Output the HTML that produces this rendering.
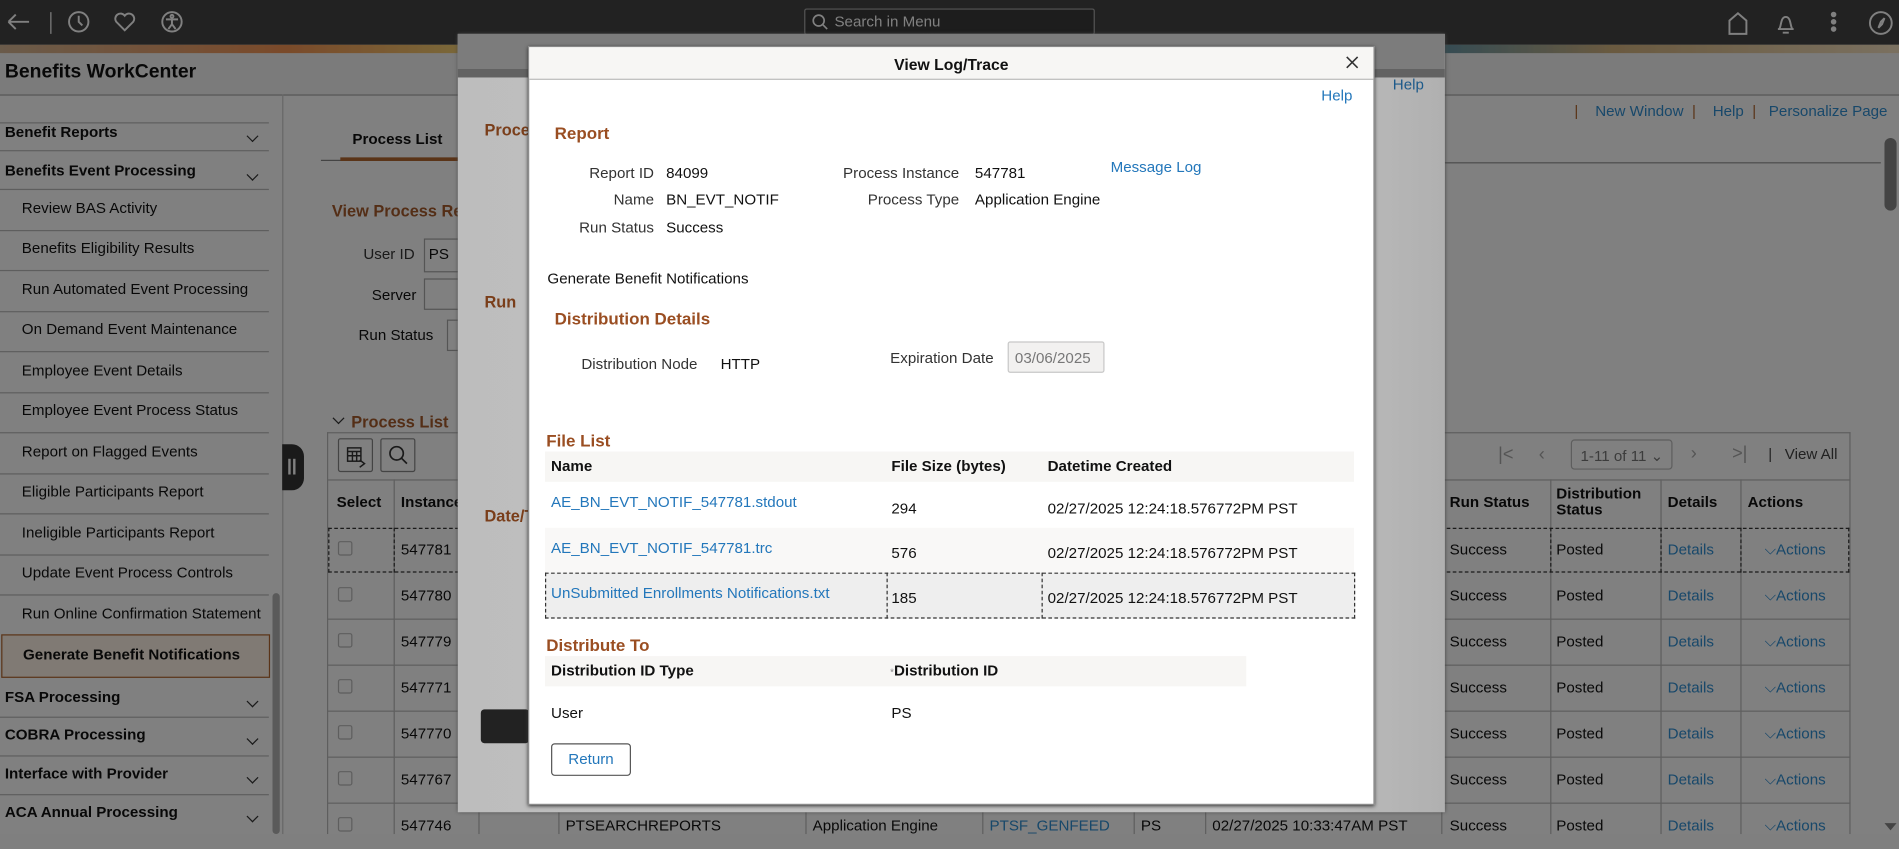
<!DOCTYPE html>
<html><head><meta charset="utf-8"><style>
*{margin:0;padding:0;box-sizing:border-box}
.wrap{position:absolute;left:0;top:0;width:1568px;height:689px;transform:scale(1.2111,1.2105);transform-origin:0 0;font-family:"Liberation Sans",Arial,sans-serif;font-size:12.5px;color:#111}
.pg{position:absolute;left:0;top:0;width:1568px;height:689px;background:#fff;filter:brightness(0.5)}
.a{position:absolute;white-space:nowrap}
.b{font-weight:bold}
.br{color:#9a4e22;font-weight:bold;font-size:14px}
.dbr{color:#a85c2c;font-weight:bold;font-size:13.5px}
.lk{color:#2377bb}
.dl{color:#2f8fd4}
.hl{position:absolute;height:1px;background:#bcbcbc}
.vl{position:absolute;width:1px;background:#bcbcbc}
.chev{position:absolute;width:7px;height:7px;border-right:1.3px solid #333;border-bottom:1.3px solid #333;transform:rotate(45deg)}
</style></head><body style="margin:0;width:1899px;height:834px;overflow:hidden;background:#7f7f7f"><div class="wrap">
<div class="pg">
<!-- top bar -->
<div class="a" style="left:0;top:0;width:1568px;height:37px;background:#444"></div>
<svg class="a" style="left:0;top:0" width="1568" height="37" fill="none" stroke="#fff" stroke-width="1.6">
<path d="M7 18h17M7 18l6-6M7 18l6 6"/><path d="M42 10v18" stroke-width="1"/>
<circle cx="65" cy="18" r="8"/><path d="M65 13v5l3 3"/>
<path d="M103 25l-7-7a4 4 0 0 1 7-5a4 4 0 0 1 7 5z"/>
<circle cx="142" cy="18" r="8"/><circle cx="142" cy="13.5" r="1.2"/><path d="M137 16h10M142 16v4l-3 4M142 20l3 4"/>
<path d="M1428 28v-11l7-6 7 6v11z"/><path d="M1468 24h13M1469 24c2-2 1-10 5.5-10s3.5 8 5.5 10M1472 27h5"/>
<circle cx="1514" cy="12" r="1.5" fill="#fff"/><circle cx="1514" cy="18" r="1.5" fill="#fff"/><circle cx="1514" cy="24" r="1.5" fill="#fff"/>
<circle cx="1553" cy="19" r="9"/><path d="M1556 15l-2 5-3 3 2-5z"/>
</svg>
<div class="a" style="left:664px;top:7px;width:240px;height:22px;border:1px solid #aaa;border-radius:2px;background:#3a3a3a"></div>
<svg class="a" style="left:670px;top:11px" width="14" height="14" fill="none" stroke="#fff" stroke-width="1.4"><circle cx="6" cy="6" r="4.5"/><path d="M9.5 9.5l3.5 3.5"/></svg>
<div class="a" style="left:689px;top:11px;color:#fff;font-size:12.5px">Search in Menu</div>
<div class="a" style="left:0;top:37px;width:1568px;height:7px;background:linear-gradient(90deg,#d4b694,#f49454 15%,#f4d474 25%,#5e94aa 35%,#f4c060 50%,#b47454 60%,#5e94aa 75%,#d4b480 85%,#f4e0c0)"></div>
<div class="a" style="left:0;top:44px;width:1568px;height:34px;background:#f5f5f5"></div>
<div class="a b" style="left:4px;top:51px;font-size:16px;color:#111">Benefits WorkCenter</div>
<div class="hl" style="left:0;top:78px;width:1568px;background:#aaa"></div>
<div class="hl" style="left:0;top:101px;width:222px"></div>
<div class="a b" style="left:4px;top:102px">Benefit Reports</div><div class="chev" style="left:205px;top:109px"></div>
<div class="hl" style="left:0;top:124px;width:222px"></div>
<div class="a b" style="left:4px;top:134px">Benefits Event Processing</div><div class="chev" style="left:205px;top:141px"></div>
<div class="hl" style="left:0;top:156px;width:222px"></div>
<div class="a" style="left:18px;top:165px">Review BAS Activity</div><div class="hl" style="left:0;top:190px;width:222px"></div>
<div class="a" style="left:18px;top:198px">Benefits Eligibility Results</div><div class="hl" style="left:0;top:223px;width:222px"></div>
<div class="a" style="left:18px;top:232px">Run Automated Event Processing</div><div class="hl" style="left:0;top:257px;width:222px"></div>
<div class="a" style="left:18px;top:265px">On Demand Event Maintenance</div><div class="hl" style="left:0;top:290px;width:222px"></div>
<div class="a" style="left:18px;top:299px">Employee Event Details</div><div class="hl" style="left:0;top:324px;width:222px"></div>
<div class="a" style="left:18px;top:332px">Employee Event Process Status</div><div class="hl" style="left:0;top:357px;width:222px"></div>
<div class="a" style="left:18px;top:366px">Report on Flagged Events</div><div class="hl" style="left:0;top:391px;width:222px"></div>
<div class="a" style="left:18px;top:399px">Eligible Participants Report</div><div class="hl" style="left:0;top:424px;width:222px"></div>
<div class="a" style="left:18px;top:433px">Ineligible Participants Report</div><div class="hl" style="left:0;top:458px;width:222px"></div>
<div class="a" style="left:18px;top:466px">Update Event Process Controls</div><div class="hl" style="left:0;top:491px;width:222px"></div>
<div class="a" style="left:18px;top:500px">Run Online Confirmation Statement</div>
<div class="a" style="left:1px;top:524px;width:222px;height:36px;border:1.5px solid #b4682f;background:#fff4e8"></div>
<div class="a b" style="left:19px;top:534px">Generate Benefit Notifications</div>
<div class="a b" style="left:4px;top:569px">FSA Processing</div><div class="chev" style="left:205px;top:576px"></div><div class="hl" style="left:0;top:592px;width:222px"></div>
<div class="a b" style="left:4px;top:600px">COBRA Processing</div><div class="chev" style="left:205px;top:607px"></div><div class="hl" style="left:0;top:624px;width:222px"></div>
<div class="a b" style="left:4px;top:632px">Interface with Provider</div><div class="chev" style="left:205px;top:639px"></div><div class="hl" style="left:0;top:656px;width:222px"></div>
<div class="a b" style="left:4px;top:664px">ACA Annual Processing</div><div class="chev" style="left:205px;top:671px"></div>
<div class="a" style="left:225px;top:490px;width:6px;height:199px;background:#b4b4b4;border-radius:3px"></div>
<div class="vl" style="left:233px;top:78px;height:611px;background:#ccc"></div>
<div class="a" style="left:233px;top:367px;width:18px;height:38px;background:#333;border-radius:0 10px 10px 0"></div>
<div class="a" style="left:238px;top:379px;width:2px;height:13px;background:#fff"></div><div class="a" style="left:242px;top:379px;width:2px;height:13px;background:#fff"></div>
<div class="a dl" style="left:1300px;top:85px"><span style="color:#b4682f">|</span>&nbsp;&nbsp;&nbsp; New Window&nbsp; <span style="color:#b4682f">|</span>&nbsp;&nbsp;&nbsp; Help&nbsp; <span style="color:#b4682f">|</span>&nbsp;&nbsp; Personalize Page</div>
<div class="hl" style="left:1193px;top:134px;width:360px;background:#999"></div>
<div class="a" style="left:1556px;top:114px;width:10px;height:60px;background:#888;border-radius:5px"></div>
<div class="a" style="left:1556px;top:680px;width:0;height:0;border-left:5px solid transparent;border-right:5px solid transparent;border-top:6px solid #888"></div>
<div class="a b" style="left:291px;top:108px">Process List</div>
<div class="hl" style="left:265px;top:132px;width:130px;background:#888"></div>
<div class="a" style="left:281px;top:130px;width:100px;height:3px;background:#b4682f"></div>
<div class="a dbr" style="left:274px;top:167px">View Process Re</div>
<div class="a" style="left:300px;top:203px;color:#333">User ID</div>
<div class="a" style="left:350px;top:197px;width:40px;height:28px;border:1px solid #aaa;background:#fff;padding:5px 3px">PS</div>
<div class="a" style="left:307px;top:237px">Server</div>
<div class="a" style="left:350px;top:230px;width:40px;height:26px;border:1px solid #aaa"></div>
<div class="a" style="left:296px;top:270px">Run Status</div>
<div class="a" style="left:369px;top:264px;width:20px;height:26px;border:1px solid #aaa"></div>
<div class="chev" style="left:276px;top:342px"></div>
<div class="a dbr" style="left:290px;top:341px">Process List</div>
<div class="hl" style="left:270px;top:357px;width:1258px"></div>
<div class="vl" style="left:270px;top:357px;height:332px"></div><div class="vl" style="left:1527px;top:357px;height:332px"></div>
<div class="a" style="left:279px;top:362px;width:29px;height:28px;border:1px solid #888;border-radius:2px"></div>
<div class="a" style="left:314px;top:362px;width:29px;height:28px;border:1px solid #888;border-radius:2px"></div>
<svg class="a" style="left:285px;top:367px" width="20" height="20" fill="none" stroke="#333" stroke-width="1.2"><rect x="2" y="3" width="11" height="11"/><path d="M2 6h11M2 9.5h11M6 6v8M9.5 6v8M12 13l4 3-4 3"/></svg>
<svg class="a" style="left:320px;top:367px" width="18" height="18" fill="none" stroke="#333" stroke-width="1.4"><circle cx="7.5" cy="7.5" r="5.5"/><path d="M11.5 11.5l4.5 4.5"/></svg>
<div class="a" style="left:1237px;top:367px;color:#aaa;font-size:15px">|&lt;&nbsp;&nbsp;&nbsp;&nbsp;&nbsp;‹</div>
<div class="a" style="left:1297px;top:363px;width:84px;height:25px;border:1px solid #bbb;border-radius:3px;padding:5px 7px;color:#777">1-11 of 11 ⌄</div>
<div class="a" style="left:1396px;top:366px;color:#aaa;font-size:15px">›&nbsp;&nbsp;&nbsp;&nbsp;&nbsp;&nbsp;&nbsp;&gt;|</div>
<div class="a" style="left:1460px;top:368px;color:#444">|&nbsp;&nbsp; View All</div>
<div class="hl" style="left:270px;top:396px;width:1258px"></div>
<div class="a b" style="left:278px;top:408px">Select</div><div class="a b" style="left:331px;top:408px">Instance</div>
<div class="a b" style="left:1197px;top:408px">Run Status</div>
<div class="a b" style="left:1285px;top:402px;line-height:13px">Distribution<br>Status</div>
<div class="a b" style="left:1377px;top:408px">Details</div><div class="a b" style="left:1443px;top:408px">Actions</div>
<div class="vl" style="left:325px;top:396px;height:293px"></div>
<div class="vl" style="left:1190px;top:396px;height:293px"></div><div class="vl" style="left:1280px;top:396px;height:293px"></div>
<div class="vl" style="left:1371px;top:396px;height:293px"></div><div class="vl" style="left:1437px;top:396px;height:293px"></div>
<div class="a" style="left:271px;top:436px;width:1256px;height:37px;border:1px dashed #333"></div>
<div class="a" style="left:325px;top:436px;width:1px;height:37px;border-left:1px dashed #333"></div>
<div class="a" style="left:1280px;top:436px;width:1px;height:37px;border-left:1px dashed #333"></div>
<div class="a" style="left:1371px;top:436px;width:1px;height:37px;border-left:1px dashed #333"></div>
<div class="a" style="left:1437px;top:436px;width:1px;height:37px;border-left:1px dashed #333"></div>
<div class="hl" style="left:270px;top:511px;width:1258px"></div><div class="hl" style="left:270px;top:549px;width:1258px"></div>
<div class="hl" style="left:270px;top:587px;width:1258px"></div><div class="hl" style="left:270px;top:625px;width:1258px"></div>
<div class="hl" style="left:270px;top:663px;width:1258px"></div>
<div class="a" style="left:279px;top:447px;width:12px;height:12px;border:1px solid #bbb;border-radius:2px"></div><div class="a" style="left:331px;top:447px">547781</div>
<div class="a" style="left:279px;top:485px;width:12px;height:12px;border:1px solid #bbb;border-radius:2px"></div><div class="a" style="left:331px;top:485px">547780</div>
<div class="a" style="left:279px;top:523px;width:12px;height:12px;border:1px solid #bbb;border-radius:2px"></div><div class="a" style="left:331px;top:523px">547779</div>
<div class="a" style="left:279px;top:561px;width:12px;height:12px;border:1px solid #bbb;border-radius:2px"></div><div class="a" style="left:331px;top:561px">547771</div>
<div class="a" style="left:279px;top:599px;width:12px;height:12px;border:1px solid #bbb;border-radius:2px"></div><div class="a" style="left:331px;top:599px">547770</div>
<div class="a" style="left:279px;top:637px;width:12px;height:12px;border:1px solid #bbb;border-radius:2px"></div><div class="a" style="left:331px;top:637px">547767</div>
<div class="a" style="left:279px;top:675px;width:12px;height:12px;border:1px solid #bbb;border-radius:2px"></div><div class="a" style="left:331px;top:675px">547746</div>
<div class="vl" style="left:395px;top:670px;height:19px"></div><div class="vl" style="left:461px;top:670px;height:19px"></div><div class="vl" style="left:665px;top:670px;height:19px"></div><div class="vl" style="left:811px;top:670px;height:19px"></div><div class="vl" style="left:936px;top:670px;height:19px"></div><div class="vl" style="left:995px;top:670px;height:19px"></div>
<div class="a" style="left:467px;top:675px">PTSEARCHREPORTS</div><div class="a" style="left:671px;top:675px">Application Engine</div>
<div class="a dl" style="left:817px;top:675px">PTSF_GENFEED</div><div class="a" style="left:942px;top:675px">PS</div><div class="a" style="left:1001px;top:675px">02/27/2025 10:33:47AM PST</div>
<div class="a" style="left:1197px;top:435px;line-height:38px">Success<br>Success<br>Success<br>Success<br>Success<br>Success<br>Success</div>
<div class="a" style="left:1285px;top:435px;line-height:38px">Posted<br>Posted<br>Posted<br>Posted<br>Posted<br>Posted<br>Posted</div>
<div class="a dl" style="left:1377px;top:435px;line-height:38px">Details<br>Details<br>Details<br>Details<br>Details<br>Details<br>Details</div>
<div class="a dl" style="left:1457px;top:435px;line-height:38px">⌵Actions<br>⌵Actions<br>⌵Actions<br>⌵Actions<br>⌵Actions<br>⌵Actions<br>⌵Actions</div>
</div>
<!-- outer modal -->
<div class="a" style="left:378px;top:28px;width:815px;height:643px;background:linear-gradient(90deg,#bdbdbd,#c4c4c4 80%,#b0b0b0);box-shadow:0 0 3px #444"></div>
<div class="a" style="left:378px;top:28px;width:815px;height:29px;background:#7c7c7c"></div>
<div class="a" style="left:378px;top:57px;width:815px;height:7px;background:#626262"></div>
<div class="a" style="left:1150px;top:63px;color:#1d5a8a">Help</div>
<div class="a dbr" style="left:400px;top:100px;color:#7a3e1a">Proce</div>
<div class="a dbr" style="left:400px;top:242px;color:#7a3e1a">Run</div>
<div class="a dbr" style="left:400px;top:419px;color:#7a3e1a">Date/T</div>
<div class="a" style="left:397px;top:586px;width:40px;height:28px;background:#222;border-radius:3px"></div>
<!-- dialog -->
<div class="a" style="left:436px;top:38px;width:699px;height:627px;background:#fff;border:1px solid #888;box-shadow:0 1px 3px #333"></div>
<div class="a" style="left:437px;top:39px;width:697px;height:27px;background:#f7f6f4;border-bottom:1px solid #bbb"></div>
<div class="a b" style="left:437px;top:46px;width:697px;text-align:center;font-size:13px">View Log/Trace</div>
<svg class="a" style="left:1111px;top:46px" width="11" height="11" stroke="#333" stroke-width="1.3"><path d="M1 1l9 9M10 1l-9 9"/></svg>
<div class="a lk" style="left:1091px;top:72px">Help</div>
<div class="a br" style="left:458px;top:102px">Report</div>
<div class="a" style="left:440px;top:136px;width:100px;text-align:right;color:#333">Report ID</div><div class="a" style="left:550px;top:136px">84099</div>
<div class="a" style="left:440px;top:158px;width:100px;text-align:right;color:#333">Name</div><div class="a" style="left:550px;top:158px">BN_EVT_NOTIF</div>
<div class="a" style="left:440px;top:181px;width:100px;text-align:right;color:#333">Run Status</div><div class="a" style="left:550px;top:181px">Success</div>
<div class="a" style="left:652px;top:136px;width:140px;text-align:right;color:#333">Process Instance</div><div class="a" style="left:805px;top:136px">547781</div>
<div class="a" style="left:652px;top:158px;width:140px;text-align:right;color:#333">Process Type</div><div class="a" style="left:805px;top:158px">Application Engine</div>
<div class="a lk" style="left:917px;top:131px">Message Log</div>
<div class="a" style="left:452px;top:223px">Generate Benefit Notifications</div>
<div class="a br" style="left:458px;top:255px">Distribution Details</div>
<div class="a" style="left:480px;top:294px;color:#333">Distribution Node</div><div class="a" style="left:595px;top:294px">HTTP</div>
<div class="a" style="left:735px;top:289px;color:#333">Expiration Date</div>
<div class="a" style="left:832px;top:282px;width:80px;height:26px;background:#f2f1f0;border:1px solid #c8c8c8;border-radius:2px;padding:6px 5px;color:#777">03/06/2025</div>
<div class="a br" style="left:451px;top:356px">File List</div>
<div class="a" style="left:450px;top:373px;width:668px;height:25px;background:#f7f6f4"></div>
<div class="a b" style="left:455px;top:378px">Name</div><div class="a b" style="left:736px;top:378px">File Size (bytes)</div><div class="a b" style="left:865px;top:378px">Datetime Created</div>
<div class="a lk" style="left:455px;top:408px">AE_BN_EVT_NOTIF_547781.stdout</div><div class="a" style="left:736px;top:413px">294</div><div class="a" style="left:865px;top:413px">02/27/2025 12:24:18.576772PM PST</div>
<div class="a" style="left:450px;top:436px;width:668px;height:37px;background:#f9f8f7"></div>
<div class="a lk" style="left:455px;top:446px">AE_BN_EVT_NOTIF_547781.trc</div><div class="a" style="left:736px;top:450px">576</div><div class="a" style="left:865px;top:450px">02/27/2025 12:24:18.576772PM PST</div>
<div class="a" style="left:450px;top:473px;width:669px;height:38px;background:#eee;border:1px dashed #333"></div>
<div class="a" style="left:732px;top:473px;width:1px;height:38px;border-left:1px dashed #333"></div><div class="a" style="left:860px;top:473px;width:1px;height:38px;border-left:1px dashed #333"></div>
<div class="a lk" style="left:455px;top:483px">UnSubmitted Enrollments Notifications.txt</div><div class="a" style="left:736px;top:487px">185</div><div class="a" style="left:865px;top:487px">02/27/2025 12:24:18.576772PM PST</div>
<div class="a br" style="left:451px;top:525px">Distribute To</div>
<div class="a" style="left:450px;top:542px;width:579px;height:25px;background:#f7f6f4"></div>
<div class="a b" style="left:455px;top:547px">Distribution ID Type</div><div class="a b" style="left:735px;top:547px"><span style="font-size:8px;color:#888;font-weight:normal">*</span>Distribution ID</div>
<div class="a" style="left:455px;top:582px">User</div><div class="a" style="left:736px;top:582px">PS</div>
<div class="a lk" style="left:455px;top:614px;width:66px;height:27px;border:1px solid #555;border-radius:3px;text-align:center;line-height:25px">Return</div>
</div></body></html>
